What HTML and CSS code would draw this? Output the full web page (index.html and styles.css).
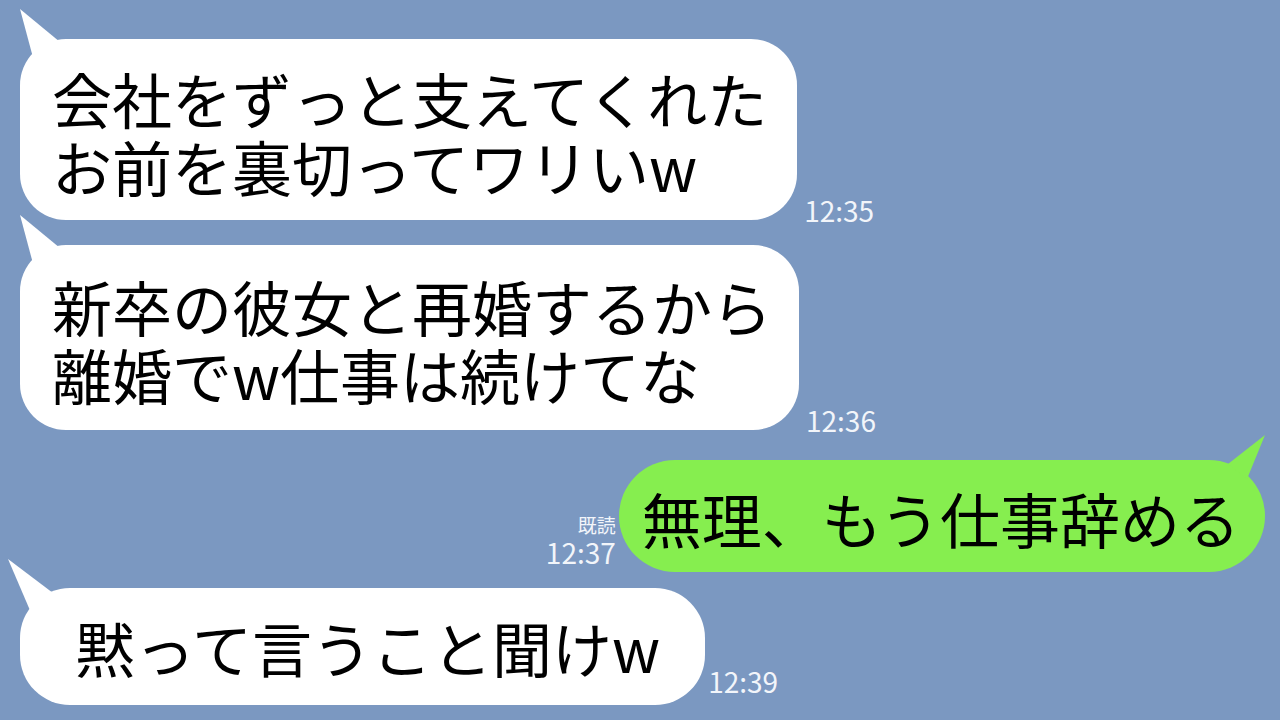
FILE: index.html
```html
<!DOCTYPE html>
<html lang="ja">
<head>
<meta charset="utf-8">
<link rel="stylesheet" href="styles.css">
</head>
<body>
<main class="chat">
  <div class="row row-1 left">
    <div class="bubble white two">会社をずっと支えてくれた<br>お前を裏切ってワリいw</div>
    <div class="meta"><span class="time">12:35</span></div>
  </div>
  <div class="row row-2 left">
    <div class="bubble white two b2">新卒の彼女と再婚するから<br>離婚でw仕事は続けてな</div>
    <div class="meta"><span class="time">12:36</span></div>
  </div>
  <div class="row row-3 right">
    <div class="meta meta-right"><span class="read">既読</span><span class="time">12:37</span></div>
    <div class="bubble green">無理、もう仕事辞める</div>
  </div>
  <div class="row row-4 left">
    <div class="bubble white one">黙って言うこと聞けw</div>
    <div class="meta meta-last"><span class="time">12:39</span></div>
  </div>
</main>
</body>
</html>
```
FILE: styles.css
```css
html, body {
  margin: 0;
  padding: 0;
}
body {
  width: 1280px;
  height: 720px;
  overflow: hidden;
  background: #7b98c1;
  font-family: "Noto Sans CJK JP", "Noto Sans", sans-serif;
}
.chat {
  display: flex;
  flex-direction: column;
  padding-top: 39px;
}
.row {
  display: flex;
  align-items: flex-end;
}
.row.left {
  padding-left: 20px;
}
.row.right {
  justify-content: flex-end;
  padding-right: 15px;
}
.row-2 { margin-top: 25px; }
.row-3 { margin-top: 30px; }
.row-4 { margin-top: 16px; }

.bubble {
  position: relative;
  color: #000;
  font-size: 60px;
  line-height: 68px;
  border-radius: 46px;
  white-space: nowrap;
}
.bubble.white { background: #ffffff; }
.bubble.green { background: #86ee4f; }

.bubble.two {
  padding: 25px 30px 20px 32px;
}
.bubble.b2 {
  padding: 27px 27px 22px 32px;
}
.bubble.one {
  padding: 25px 45px 24px 55px;
  border-radius: 50px;
}
.bubble.green {
  padding: 24px 25px 20px 23px;
  border-radius: 56px;
}

.bubble.white::before {
  content: "";
  position: absolute;
  left: -2px;
  top: -30px;
  width: 50px;
  height: 60px;
  background: #ffffff;
  clip-path: polygon(2px 0, 42px 33px, 17px 56px);
}
.row-4 .bubble.white::before {
  left: -14px;
  top: -29px;
  clip-path: polygon(2px 0, 47px 34px, 26px 56px);
}
.bubble.green::before {
  content: "";
  position: absolute;
  right: -2px;
  top: -25px;
  width: 50px;
  height: 60px;
  background: #86ee4f;
  clip-path: polygon(48px 0, 11px 29px, 30px 44px);
}

.meta {
  display: flex;
  flex-direction: column;
  color: #f2f5fa;
  padding-left: 7px;
  margin-bottom: -6px;
}
.meta-right {
  align-items: flex-end;
  padding-left: 0;
  padding-right: 3px;
  margin-bottom: 4px;
}
.meta-last {
  padding-left: 3px;
  margin-bottom: 8px;
}
.time {
  font-size: 28px;
  line-height: 32px;
}
.read {
  font-size: 19px;
  line-height: 22px;
}
```
